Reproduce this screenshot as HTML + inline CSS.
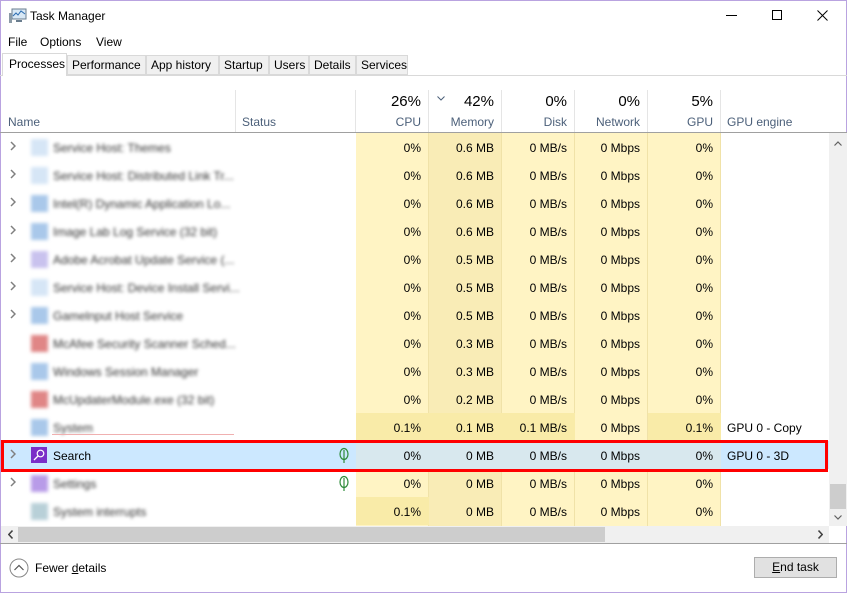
<!DOCTYPE html>
<html><head><meta charset="utf-8"><style>
*{margin:0;padding:0;box-sizing:border-box}
body{width:847px;height:593px;overflow:hidden;background:#fff;font-family:"Liberation Sans",sans-serif;font-size:12px;color:#000;position:relative}
.a{position:absolute}
.win{position:absolute;left:0;top:0;width:847px;height:593px;border:1px solid #b9a3e0}
.tab{position:absolute;top:55px;height:20px;background:#f0f0f0;border:1px solid #d9d9d9;line-height:18px;padding:0 4px;font-size:12px}
.hdr{position:absolute;top:90px;height:43px;border-right:1px solid #e5e5e5}
.row{position:absolute;left:1px;width:828px;height:28px}
.c{position:absolute;top:0;height:28px;line-height:30px;text-align:right;padding-right:8px;font-size:12px}
.blur{position:absolute;left:52px;top:0;line-height:30px;color:#333;filter:blur(1.7px);font-size:12px;white-space:nowrap}
.ic{position:absolute;left:30px;top:6px;width:17px;height:17px;background:#cfe0f3;filter:blur(1.8px)}
.chev{position:absolute;left:9px;top:8px}
</style></head><body>
<div class="win"></div>
<svg class="a" style="left:9px;top:8px" width="18" height="16" viewBox="0 0 18 16"><rect x="3" y="1" width="14" height="10" fill="#d8e8f5" stroke="#6a7d8e"/><polyline points="4,8 7,5 9,7 12,3 16,6" fill="none" stroke="#2a6bb0" stroke-width="1"/><rect x="0" y="5" width="3" height="10" fill="#8a9aa6"/><rect x="7" y="12" width="6" height="2" fill="#6a7d8e"/></svg>
<div class="a" style="left:30px;top:9px;font-size:12px">Task Manager</div>
<div class="a" style="left:726px;top:15px;width:11px;height:1px;background:#000"></div>
<div class="a" style="left:772px;top:10px;width:10px;height:10px;border:1px solid #000"></div>
<svg class="a" style="left:817px;top:10px" width="11" height="11"><path d="M0.5 0.5L10.5 10.5M10.5 0.5L0.5 10.5" stroke="#000" stroke-width="1"/></svg>
<div class="a" style="left:8px;top:35px">File</div>
<div class="a" style="left:40px;top:35px">Options</div>
<div class="a" style="left:96px;top:35px">View</div>
<div class="a" style="left:0;top:75px;width:847px;height:1px;background:#d9d9d9"></div>
<div class="tab" style="left:67px;width:79px">Performance</div>
<div class="tab" style="left:146px;width:73px">App history</div>
<div class="tab" style="left:219px;width:50px">Startup</div>
<div class="tab" style="left:269px;width:40px">Users</div>
<div class="tab" style="left:309px;width:47px">Details</div>
<div class="tab" style="left:356px;width:52px">Services</div>
<div class="a" style="left:2px;top:53px;width:65px;height:23px;background:#fff;border:1px solid #d9d9d9;border-bottom:none;line-height:20px;padding-left:6px">Processes</div>
<div class="hdr" style="left:0;width:236px"><div class="a" style="left:8px;top:25px;color:#4c607a">Name</div></div>
<div class="hdr" style="left:236px;width:120px"><div class="a" style="left:6px;top:25px;color:#4c607a">Status</div></div>
<div class="hdr" style="left:356px;width:73px"><div class="a" style="right:7px;top:3px;font-size:15px">26%</div><div class="a" style="right:7px;top:25px;color:#4c607a">CPU</div></div>
<div class="hdr" style="left:429px;width:73px"><svg class="a" style="left:8px;top:6px" width="8" height="5"><polyline points="0.5,0.5 4,4 7.5,0.5" fill="none" stroke="#4c607a"/></svg><div class="a" style="right:7px;top:3px;font-size:15px">42%</div><div class="a" style="right:7px;top:25px;color:#4c607a">Memory</div></div>
<div class="hdr" style="left:502px;width:73px"><div class="a" style="right:7px;top:3px;font-size:15px">0%</div><div class="a" style="right:7px;top:25px;color:#4c607a">Disk</div></div>
<div class="hdr" style="left:575px;width:73px"><div class="a" style="right:7px;top:3px;font-size:15px">0%</div><div class="a" style="right:7px;top:25px;color:#4c607a">Network</div></div>
<div class="hdr" style="left:648px;width:73px"><div class="a" style="right:7px;top:3px;font-size:15px">5%</div><div class="a" style="right:7px;top:25px;color:#4c607a">GPU</div></div>
<div class="a" style="left:727px;top:115px;color:#4c607a">GPU engine</div>
<div class="a" style="left:0;top:132px;width:847px;height:1px;background:#a0a0a0"></div>
<div class="a" style="left:356px;top:133px;width:73px;height:393px;background:#fff4c4;border-right:1px solid #f0e2a8"></div>
<div class="a" style="left:429px;top:133px;width:73px;height:393px;background:#f9ecb6;border-right:1px solid #f0e2a8"></div>
<div class="a" style="left:502px;top:133px;width:73px;height:393px;background:#fff4c4;border-right:1px solid #f0e2a8"></div>
<div class="a" style="left:575px;top:133px;width:73px;height:393px;background:#fff4c4;border-right:1px solid #f0e2a8"></div>
<div class="a" style="left:648px;top:133px;width:73px;height:393px;background:#fff4c4;border-right:1px solid #f0e2a8"></div>
<div id="rows"></div>
<script>
var d=[
["Service Host: Themes",1,"0%","0.6 MB","0 MB/s","0 Mbps","0%",""],
["Service Host: Distributed Link Tr...",1,"0%","0.6 MB","0 MB/s","0 Mbps","0%",""],
["Intel(R) Dynamic Application Lo...",1,"0%","0.6 MB","0 MB/s","0 Mbps","0%",""],
["Image Lab Log Service (32 bit)",1,"0%","0.6 MB","0 MB/s","0 Mbps","0%",""],
["Adobe Acrobat Update Service (...",1,"0%","0.5 MB","0 MB/s","0 Mbps","0%",""],
["Service Host: Device Install Servi...",1,"0%","0.5 MB","0 MB/s","0 Mbps","0%",""],
["Gamelnput Host Service",1,"0%","0.5 MB","0 MB/s","0 Mbps","0%",""],
["McAfee Security Scanner Sched...",0,"0%","0.3 MB","0 MB/s","0 Mbps","0%",""],
["Windows Session Manager",0,"0%","0.3 MB","0 MB/s","0 Mbps","0%",""],
["McUpdaterModule.exe (32 bit)",0,"0%","0.2 MB","0 MB/s","0 Mbps","0%",""],
["System",0,"0.1%","0.1 MB","0.1 MB/s","0 Mbps","0.1%","GPU 0 - Copy"],
["Search",1,"0%","0 MB","0 MB/s","0 Mbps","0%","GPU 0 - 3D"],
["Settings",1,"0%","0 MB","0 MB/s","0 Mbps","0%",""],
["System interrupts",0,"0.1%","0 MB","0 MB/s","0 Mbps","0%",""]];
var icc=["#d6e6f6","#d6e6f6","#a9c8ea","#a9c8ea","#c9c2ee","#d6e6f6","#a9c8ea","#e08686","#a9c8ea","#e08686","#a9c8ea","","#b89be8","#b8d0d8"];
var xs=[356,429,502,575,648],h="";
d.forEach(function(r,i){var y=133+i*28;var sel=i==11;
h+='<div class="row" style="top:'+y+'px;'+(sel?'background:#cce8ff':'')+'">';
if(r[1])h+='<svg class="chev" width="6" height="10"><polyline points="1,1 5,5 1,9" fill="none" stroke="#808080" stroke-width="1.5"/></svg>';
if(sel){h+='<div class="a" style="left:30px;top:6px;width:16px;height:16px;background:#7a2fc8"><svg width="16" height="16"><circle cx="9.5" cy="6.5" r="3.3" fill="none" stroke="#fff" stroke-width="1.2"/><line x1="7" y1="9" x2="3" y2="13" stroke="#fff" stroke-width="1.3"/></svg></div><div class="a" style="left:52px;line-height:30px">Search</div>';}
else{h+='<div class="ic" style="background:'+icc[i]+'"></div><div class="blur">'+r[0]+'</div>';}
if(i==11||i==12)h+='<svg class="a" style="left:337px;top:6px" width="12" height="17"><ellipse cx="6" cy="7" rx="4" ry="5.5" fill="none" stroke="#2e8b3a" stroke-width="1.2"/><line x1="6" y1="3" x2="6" y2="16" stroke="#2e8b3a" stroke-width="1.2"/></svg>';
for(var k=0;k<5;k++){var v=r[2+k];var dk=/0\.1/.test(v)&&!sel;
h+='<div class="c" style="left:'+(xs[k]-1)+'px;width:73px;'+(sel?'background:#d8e8ee;':dk?'background:#f9eba8;':'')+'">'+v+'</div>';}
if(r[7])h+='<div class="a" style="left:726px;line-height:30px">'+r[7]+'</div>';
h+='</div>';});
document.getElementById('rows').innerHTML=h;
</script>
<div class="a" style="left:52px;top:434px;width:182px;height:1px;background:#f0b0b0"></div>
<div class="a" style="left:1px;top:440px;width:827px;height:32px;border:3px solid #f00"></div>
<div class="a" style="left:829px;top:133px;width:18px;height:393px;background:#f0f0f0"></div>
<svg class="a" style="left:834px;top:141px" width="8" height="5"><polyline points="0.5,4.5 4,1 7.5,4.5" fill="none" stroke="#606060" stroke-width="1.2"/></svg>
<div class="a" style="left:830px;top:484px;width:16px;height:25px;background:#cdcdcd"></div>
<svg class="a" style="left:834px;top:515px" width="8" height="5"><polyline points="0.5,0.5 4,4 7.5,0.5" fill="none" stroke="#606060" stroke-width="1.2"/></svg>
<div class="a" style="left:1px;top:526px;width:828px;height:17px;background:#f0f0f0"></div>
<div class="a" style="left:18px;top:527px;width:587px;height:15px;background:#cdcdcd"></div>
<svg class="a" style="left:8px;top:530px" width="5" height="9"><polyline points="4.5,0.5 0.8,4.5 4.5,8.5" fill="none" stroke="#404040" stroke-width="1.5"/></svg>
<svg class="a" style="left:818px;top:530px" width="5" height="9"><polyline points="0.5,0.5 4.2,4.5 0.5,8.5" fill="none" stroke="#404040" stroke-width="1.5"/></svg>
<div class="a" style="left:0;top:543px;width:847px;height:1px;background:#a0a0a0"></div>
<svg class="a" style="left:9px;top:558px" width="20" height="20"><circle cx="10" cy="10" r="9" fill="none" stroke="#888"/><polyline points="5.5,12 10,7.5 14.5,12" fill="none" stroke="#555" stroke-width="1.2"/></svg>
<div class="a" style="left:35px;top:561px">Fewer <u>d</u>etails</div>
<div class="a" style="left:754px;top:557px;width:83px;height:21px;background:#e1e1e1;border:1px solid #adadad;text-align:center;line-height:19px"><u>E</u>nd task</div>
</body></html>
